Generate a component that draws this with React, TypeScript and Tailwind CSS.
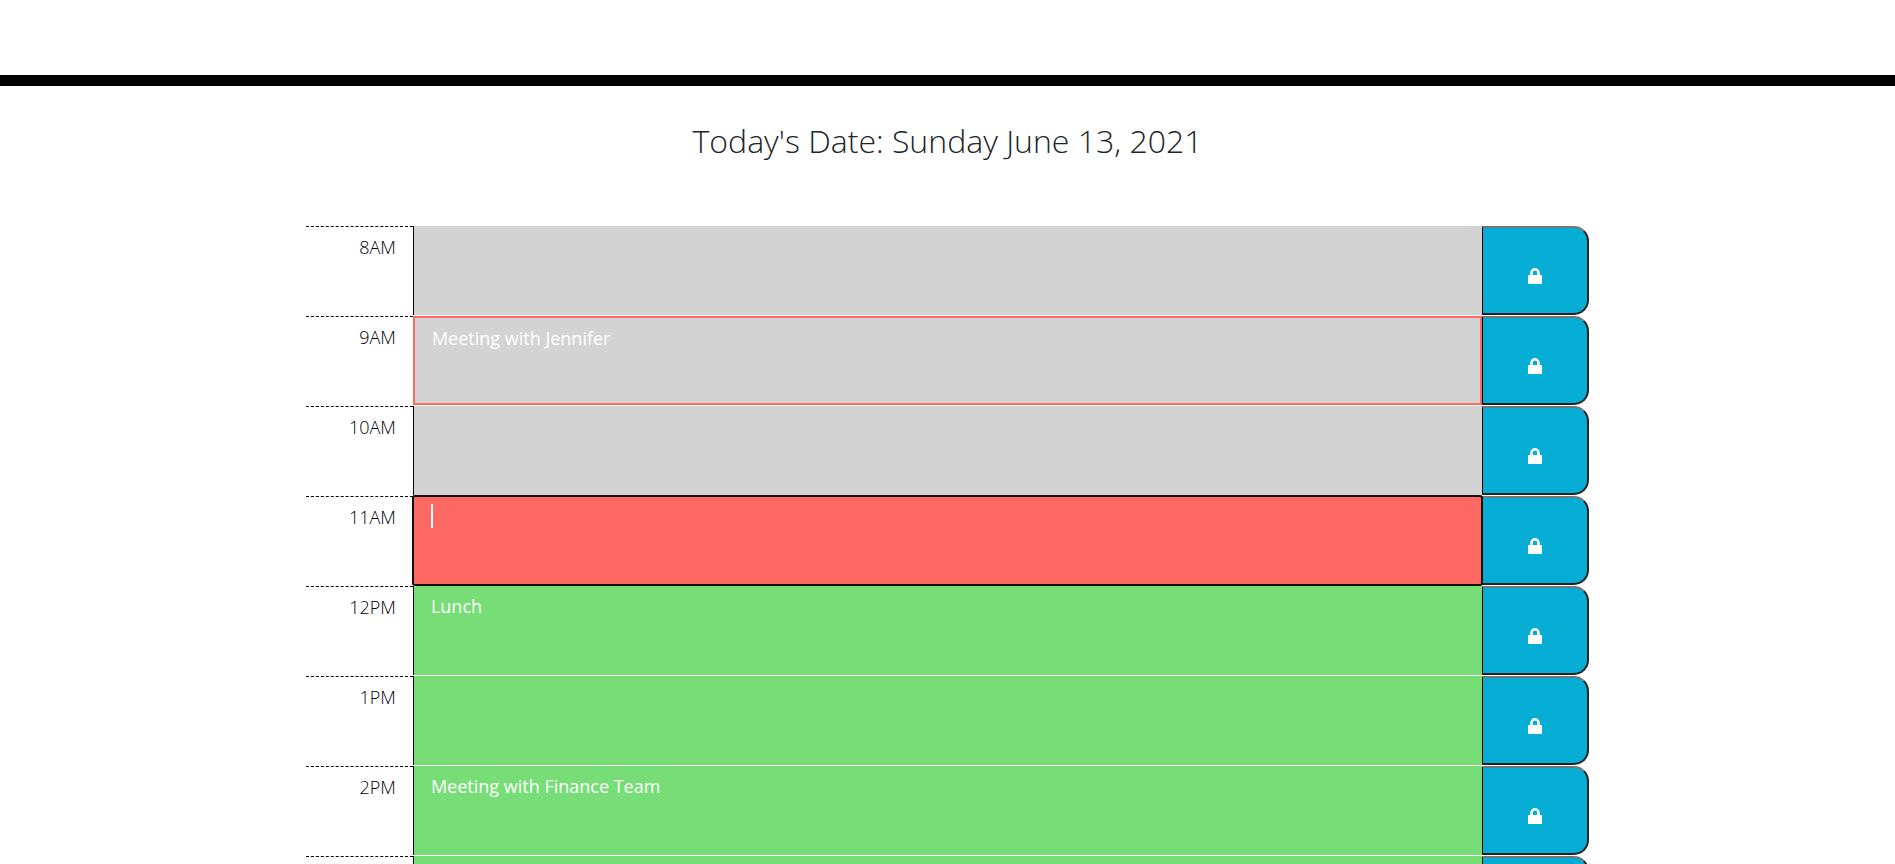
import { useState } from "react";
import clsx from "clsx";

type Phase = "past" | "present" | "future";
type Slot = { hour: string; phase: Phase; text: string; edited?: boolean };

const SLOTS: Slot[] = [
  { hour: "8AM", phase: "past", text: "" },
  { hour: "9AM", phase: "past", text: "Meeting with Jennifer", edited: true },
  { hour: "10AM", phase: "past", text: "" },
  { hour: "11AM", phase: "present", text: "" },
  { hour: "12PM", phase: "future", text: "Lunch" },
  { hour: "1PM", phase: "future", text: "" },
  { hour: "2PM", phase: "future", text: "Meeting with Finance Team" },
  { hour: "", phase: "future", text: "" },
];

const PHASE_COLOR: Record<Phase, string> = {
  past: "bg-[#d3d3d3]",
  present: "bg-[#ff6961]",
  future: "bg-[#77dd77]",
};

function LockIcon() {
  return (
    <svg viewBox="0 0 14 16" className="h-4 w-3.5" fill="currentColor" aria-hidden="true">
      <path
        fillRule="evenodd"
        d="M0.4 7H2.25V4.75a4.75 4.75 0 0 1 9.5 0V7H13.6a.4.4 0 0 1 .4.4v8.2a.4.4 0 0 1-.4.4H.4a.4.4 0 0 1-.4-.4V7.400a.4.4 0 0 1 .4-.4ZM4.75 7h4.5V4.75a2.250 2.250 0 0 0-4.5 0Z"
      />
    </svg>
  );
}

function TimeBlock({ slot, index }: { slot: Slot; index: number }) {
  const [text, setText] = useState(slot.text);
  const active = slot.phase === "present";
  const id = `slot-${index}`;

  return (
    <div className="mb-px grid h-[89px] grid-cols-[1fr_10fr_1fr]">
      <label
        htmlFor={id}
        className="border-t border-dashed border-black pt-[7px] pr-[17px] text-right font-[350] text-black"
      >
        {slot.hour}
      </label>
      <div className={clsx("relative flex", active && "z-10")}>
        <textarea
          id={id}
          value={text}
          onChange={(e) => setText(e.target.value)}
          className={clsx(
            "block w-full resize-none overflow-hidden px-[17px] py-[7px] text-white outline-none",
            PHASE_COLOR[slot.phase],
            slot.edited ? "border-2 border-[#ff6961]" : !active && "border-l border-black",
            active && "-m-px grow rounded-[3px] border-2 border-[#101010] caret-transparent",
          )}
        />
        {active && <span className="absolute top-2 left-[18px] h-6 w-0.5 bg-white" />}
      </div>
      <button
        type="button"
        aria-label="Save"
        className="flex items-center justify-center rounded-r-[15px] border-2 border-l border-t-[#767676] border-r-[#212121] border-b-[#212121] border-l-black bg-[#06aed5] pt-[11px] text-white"
      >
        <LockIcon />
      </button>
    </div>
  );
}

export default function App() {
  return (
    <div className="h-screen overflow-y-auto bg-white font-['Open_Sans',sans-serif] text-lg/[27px] text-[#212529] [scrollbar-width:none]">
      <header className="h-[86px] border-b-[11px] border-black" />
      <h1 className="pt-[35px] text-center text-[32px]/[40px] font-[350]">Today's Date: Sunday June 13, 2021</h1>
      <main className="mx-auto mt-[65px] max-w-[1283px]">
        {SLOTS.map((slot, index) => (
          <TimeBlock key={index} slot={slot} index={index} />
        ))}
      </main>
    </div>
  );
}
